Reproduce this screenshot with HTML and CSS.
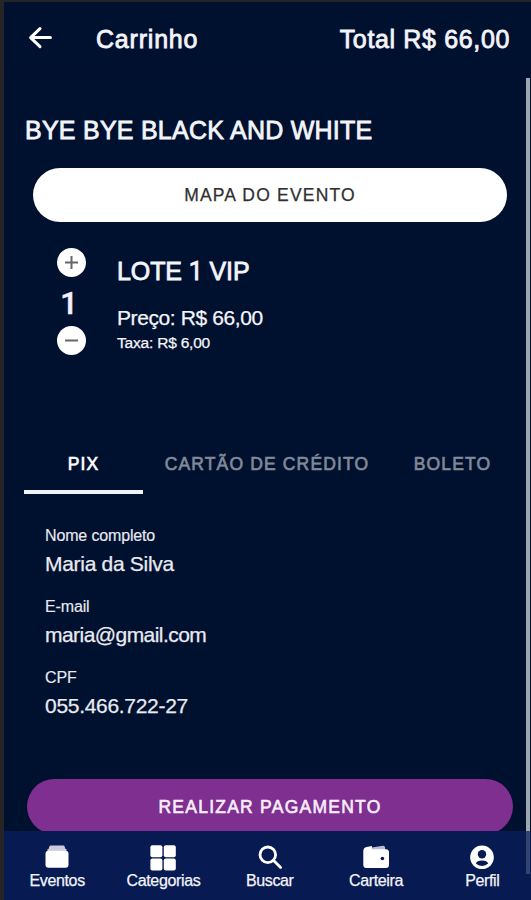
FILE: index.html
```html
<!DOCTYPE html>
<html lang="pt-BR">
<head>
<meta charset="utf-8">
<title>Carrinho</title>
<link rel="stylesheet" href="styles.css">
</head>
<body>
<div class="app">
  <header class="header">
    <svg class="back" width="24" height="24" viewBox="0 0 24 24"><path d="M12 2.6 2.6 11.6l9.4 9M2.8 11.6h19.6"/></svg>
    <h1 class="screen-title">Carrinho</h1>
    <div class="total">Total R$ 66,00</div>
  </header>
  <main class="content">
    <h2 class="event-name">BYE BYE BLACK AND WHITE</h2>
    <button class="map-button">MAPA DO EVENTO</button>
    <section class="ticket">
      <div class="stepper">
        <button class="round"><svg width="29" height="29" viewBox="0 0 29 29"><path d="M8 14.5h13M14.5 8v13"/></svg></button>
        <span class="quantity">1</span>
        <button class="round"><svg width="29" height="29" viewBox="0 0 29 29"><path d="M8 14.5h13"/></svg></button>
      </div>
      <div class="ticket-info">
        <h3 class="lot">LOTE <span class="one">1</span> VIP</h3>
        <div class="price">Preço: R$ 66,00</div>
        <div class="fee">Taxa: R$ 6,00</div>
      </div>
    </section>
    <nav class="tabs">
      <div class="tab active">PIX</div>
      <div class="tab">CARTÃO DE CRÉDITO</div>
      <div class="tab">BOLETO</div>
    </nav>
    <dl class="fields">
      <div class="field"><dt>Nome completo</dt><dd>Maria da Silva</dd></div>
      <div class="field"><dt>E-mail</dt><dd class="email">maria@gmail.com</dd></div>
      <div class="field"><dt>CPF</dt><dd>055.466.722-27</dd></div>
    </dl>
    <button class="pay-button">REALIZAR PAGAMENTO</button>
  </main>
  <nav class="bottom-nav">
    <div class="item"><svg width="26" height="26" viewBox="0 0 26 26"><path fill="#c9cbdc" d="M6.8.5h12.4q1.2 0 1.6 1.4l.7 2.1h1v3h-19V4h1l.7-2.1Q5.600.5 6.800.5z"/><rect x="1.500" y="5.700" width="23" height="17" rx="3"/></svg><span>Eventos</span></div>
    <div class="item"><svg width="26" height="26" viewBox="0 0 26 26"><rect x=".4" y=".2" width="12" height="12" rx="2"/><rect x="13.800" y=".2" width="12" height="12" rx="2"/><rect x=".4" y="13.400" width="12" height="12" rx="2"/><rect x="13.800" y="13.400" width="12" height="12" rx="2"/></svg><span>Categorias</span></div>
    <div class="item"><svg width="26" height="26" viewBox="0 0 26 26"><g fill="none" stroke="#fff" stroke-width="2.800" stroke-linecap="round"><circle cx="10.800" cy="9.800" r="7.800"/><path d="m16.600 15.600 7 7"/></g></svg><span>Buscar</span></div>
    <div class="item"><svg width="26" height="26" viewBox="0 0 26 26"><path fill="#b9bbd0" d="M4 3.200 20 .8q2.200-.1 2.200 3.100v2H4z"/><path d="M3.500 2 9 .9 8.700 4.300H23q3 .3 3 3v12.700q0 3-3 3H3.300q-3-.2-3-3V6.200Q.5 2.600 3.500 2z"/><circle cx="19.400" cy="13.500" r="1.800" fill="#071a51"/></svg><span>Carteira</span></div>
    <div class="item"><svg width="26" height="26" viewBox="0 0 26 26"><circle cx="13" cy="12.300" r="11.800"/><circle cx="13" cy="9.300" r="4.200" fill="#071a51"/><path fill="#071a51" d="M6.800 18.600q1.200-3 6.200-3t6.200 3q-2.400 2.400-6.200 2.400t-6.200-2.400z"/></svg><span>Perfil</span></div>
  </nav>
  <div class="scrollbar"></div>
</div>
</body>
</html>
```
FILE: styles.css
```css
* { box-sizing: border-box; margin: 0; padding: 0; }
body {
  width: 531px;
  height: 900px;
  padding: 2px 0 0 4px;
  overflow: hidden;
  background: #252528;
  color: #f3f4fa;
  font-family: "Liberation Sans", Arial, sans-serif;
  white-space: nowrap;
}
button { border: 0; font-family: inherit; display: block; }
h1, h2, h3 { font-size: 25px; font-weight: 400; -webkit-text-stroke: .8px currentColor; }
.app {
  position: relative;
  height: 898px;
  display: flex;
  flex-direction: column;
  overflow: hidden;
  background: #00112f;
}
.header {
  height: 74px;
  flex: none;
  display: flex;
  align-items: center;
  padding: 0 21px 0 24px;
  border-bottom: 1px solid #000e27;
}
.back { margin-bottom: 2px; fill: none; stroke: #fff; stroke-width: 3; stroke-linejoin: round; stroke-linecap: round; }
.screen-title { margin-left: 44px; letter-spacing: .8px; line-height: 30px; padding-top: 1px; }
.total { margin-left: auto; font-size: 25px; letter-spacing: .65px; line-height: 30px; padding-top: 1px; -webkit-text-stroke: .8px currentColor; }
.content { height: 755px; flex: none; padding-top: 39px; overflow: hidden; }
.event-name { line-height: 30px; padding-left: 21px; letter-spacing: .25px; }
.map-button {
  width: 474px;
  height: 54px;
  margin: 23px 0 0 29px;
  padding-top: 1px;
  border-radius: 27px;
  background: #fff;
  color: #303030;
  font-size: 17.5px;
  letter-spacing: 1.2px;
  -webkit-text-stroke: .25px currentColor;
}
.ticket { display: flex; height: 107px; margin: 26px 0 0 52px; }
.stepper { width: 30px; display: flex; flex-direction: column; align-items: center; justify-content: space-between; }
.round { width: 29px; height: 29px; border-radius: 50%; background: #fff; }
.round svg { display: block; fill: none; stroke: #66666c; stroke-width: 2; }
.quantity { padding: 4px 4px 0 0; font: 500 31px/34px Roboto, sans-serif; -webkit-text-stroke: .5px currentColor; }
.ticket-info { padding: 8px 0 0 31px; }
.lot { line-height: 30px; letter-spacing: -.1px; }
.one { font-family: Roboto, sans-serif; }
.price { margin-top: 19px; font-size: 21px; line-height: 24px; letter-spacing: -.4px; -webkit-text-stroke: .25px currentColor; }
.fee { margin-top: 3px; font-size: 15.5px; line-height: 20px; letter-spacing: -.2px; -webkit-text-stroke: .25px currentColor; }
.tabs { display: grid; grid-template-columns: 119px 248px 123px; margin: 83px 0 0 20px; }
.tab {
  height: 56px;
  border-bottom: 4px solid transparent;
  color: #828998;
  font-size: 17.5px;
  line-height: 53px;
  letter-spacing: 1.15px;
  text-align: center;
  -webkit-text-stroke: .65px currentColor;
}
.tab.active { color: #fff; border-color: #f1f2f6; }
.fields { margin: 32px 0 0 41px; height: 228px; color: #e9eaf0; }
.field { height: 71px; }
.field dt { font-size: 16px; line-height: 20px; letter-spacing: -.15px; -webkit-text-stroke: .15px currentColor; }
.field dd { margin-top: 6px; font-size: 21px; line-height: 24px; letter-spacing: -.3px; -webkit-text-stroke: .25px currentColor; }
.field .email { letter-spacing: -.55px; }
.pay-button {
  width: 486px;
  height: 55px;
  margin: 25px 0 0 23px;
  padding-top: 1px;
  border-radius: 28px;
  background: #7e2f8f;
  color: #f9edfb;
  font-size: 17.5px;
  letter-spacing: 1.25px;
  -webkit-text-stroke: .6px currentColor;
}
.bottom-nav { flex: 1; display: grid; grid-template-columns: repeat(5, 106.3px); background: #071a51; }
.item { display: flex; flex-direction: column; align-items: center; padding-top: 14px; font-size: 16px; line-height: 18px; letter-spacing: -.35px; -webkit-text-stroke: .25px currentColor; }
.item svg { fill: #fff; }
.item span { margin-top: 1px; }
.scrollbar { position: absolute; right: 1px; top: 76px; width: 4px; height: 796px; background: linear-gradient(#a0a5b3 753px, #35436f 753px); }
```
